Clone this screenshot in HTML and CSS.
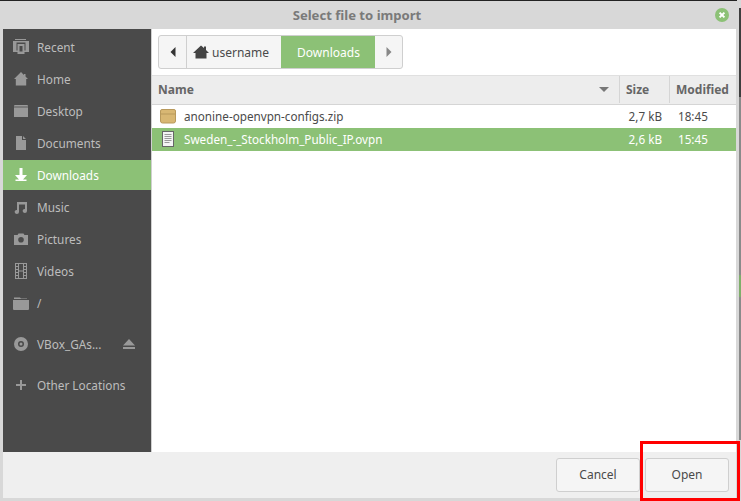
FILE: index.html
```html
<!DOCTYPE html>
<html lang="en">
<head>
<meta charset="utf-8">
<title>Select file to import</title>
<link rel="stylesheet" href="styles.css">
</head>
<body>
<div class="topline"></div>
<div class="backdrop"></div>
<div class="dialog">
  <header class="titlebar">
    <span class="title">Select file to import</span>
    <span class="close"><svg width="14" height="14" viewBox="0 0 14 14"><circle cx="7" cy="7" r="7" fill="#8cc176"/><path d="M4.600 4.600l4.800 4.800M9.400 4.600l-4.800 4.800" stroke="#fff" stroke-width="2" fill="none"/></svg></span>
  </header>
  <div class="main">
    <nav class="sidebar">
      <div class="place"><span class="ico"><svg width="16" height="16" viewBox="0 0 16 16"><path d="M2 0h11v1H2zM0 2h16v1.500H0zM0 3.500h3.500V13H0zM12.500 3.500H16V13h-3.500zM4.500 5h7v2h-7zM4.500 7h2v7h-2zM9.500 7h2v7h-2zM4.500 12.500h7V15h-7zM3.500 11.500V13h1v-1.500zM11.500 11.500V13h1v-1.500z" fill="#999"/></svg></span>Recent</div>
      <div class="place"><span class="ico"><svg width="16" height="16" viewBox="0 0 16 16"><path d="M8 1L1 8h1.800v6.500h10.400V8H15l-2.500-2.500V3h-1.500v1z" fill="#999"/></svg></span>Home</div>
      <div class="place"><span class="ico"><svg width="16" height="16" viewBox="0 0 16 16"><path d="M2 2h12a1 1 0 0 1 1 1v11H1V3a1 1 0 0 1 1-1z" fill="#999"/><path d="M1 4h14" stroke="#4a4a4a" stroke-width=".8"/></svg></span>Desktop</div>
      <div class="place"><span class="ico"><svg width="16" height="16" viewBox="0 0 16 16"><path d="M3 1h6v4h4v10H3zM10 1l3 3h-3z" fill="#999"/></svg></span>Documents</div>
      <div class="place selected"><span class="ico"><svg width="16" height="16" viewBox="0 0 16 16"><path d="M6.500 1h3v7H14l-4 4.500h3.500V14H2.500v-1.500H6L2 8h4.500z" fill="#fff"/></svg></span>Downloads</div>
      <div class="place"><span class="ico"><svg width="16" height="16" viewBox="0 0 16 16"><path d="M4 3h10v9a2.200 2 0 1 1-2-2V5.500H6V13a2.200 2 0 1 1-2-2z" fill="#999"/></svg></span>Music</div>
      <div class="place"><span class="ico"><svg width="16" height="16" viewBox="0 0 16 16"><path fill-rule="evenodd" d="M1 4h3.500l1-1.500h5l1 1.500H15v10H1zM8 6a2.800 2.800 0 1 0 0 5.600A2.800 2.800 0 0 0 8 6z" fill="#999"/></svg></span>Pictures</div>
      <div class="place"><span class="ico"><svg width="16" height="16" viewBox="0 0 16 16"><path fill-rule="evenodd" d="M2 0h12v16H2zM3 1v2h2V1zM3 4v2h2V4zM3 7v2h2V7zM3 10v2h2v-2zM3 13v2h2v-2zM11 1v2h2V1zM11 4v2h2V4zM11 7v2h2V7zM11 10v2h2v-2zM11 13v2h2v-2zM6 1v6.500h4V1zM6 8.500V15h4V8.500z" fill="#999"/></svg></span>Videos</div>
      <div class="place"><span class="ico"><svg width="16" height="16" viewBox="0 0 16 16"><path d="M1 4V2.500h6l1 1h6V4zM0 5h16v9a1 1 0 0 1-1 1H1a1 1 0 0 1-1-1z" fill="#999"/></svg></span>/</div>
      <div class="separator"></div>
      <div class="place device"><span class="ico"><svg width="16" height="16" viewBox="0 0 16 16"><path fill-rule="evenodd" d="M8 1a7 7 0 1 0 0 14A7 7 0 0 0 8 1zM8 5a3 3 0 1 1 0 6 3 3 0 0 1 0-6zM8 6.500a1.500 1.500 0 1 0 0 3 1.500 1.500 0 0 0 0-3z" fill="#999"/></svg></span><span class="label">VBox_GAs...</span><span class="eject"><svg width="14" height="14" viewBox="0 0 14 14"><path d="M7 2l6 6.500H1zM1 10h12v2H1z" fill="#999"/></svg></span></div>
      <div class="separator"></div>
      <div class="place"><span class="ico"><svg width="16" height="16" viewBox="0 0 16 16"><path d="M7 3h2v4h4v2H9v4H7V9H3V7h4z" fill="#999"/></svg></span>Other Locations</div>
    </nav>
    <section class="content">
      <div class="pathbar-row">
        <div class="pathbar">
          <span class="arrow"><svg width="6" height="10" viewBox="0 0 6 10"><path d="M5.500 0v10L.5 5z" fill="#333"/></svg></span>
          <span class="crumb"><svg class="crumb-ico" width="16" height="16" viewBox="0 0 16 16"><path d="M8 1.500L0 9h2.500v5.500h11V9H16l-3-3V2.500h-2V4z" fill="#444"/></svg>username</span>
          <span class="crumb active">Downloads</span>
          <span class="arrow end"><svg width="6" height="10" viewBox="0 0 6 10"><path d="M.5 0v10l5-5z" fill="#888"/></svg></span>
        </div>
      </div>
      <div class="list">
        <div class="head">
          <div class="col name">Name<svg class="sort" width="10" height="5" viewBox="0 0 10 5"><path d="M0 0h10L5 5z" fill="#777"/></svg></div>
          <div class="col size">Size</div>
          <div class="col modified">Modified</div>
        </div>
        <div class="row">
          <div class="cell name"><svg class="file-ico" width="16" height="16" viewBox="0 0 16 16"><path d="M2 1.500h12a1.500 1.500 0 0 1 1.500 1.500v10a2 2 0 0 1-2 2h-11a2 2 0 0 1-2-2V3A1.500 1.500 0 0 1 2 1.500z" fill="#d8b773" stroke="#b8995c"/><path d="M1 6h14" stroke="#b8995c"/></svg>anonine-openvpn-configs.zip</div>
          <div class="cell size">2,7 kB</div>
          <div class="cell modified">18:45</div>
        </div>
        <div class="row selected">
          <div class="cell name"><svg class="file-ico" width="16" height="16" viewBox="0 0 16 16"><rect x="2.500" y=".5" width="11" height="15" fill="#f4f4f4" stroke="#666"/><path d="M4.500 3.500h7M4.500 5.500h7M4.500 7.500h7M4.500 9.500h7M4.500 11.500h5" stroke="#999"/></svg>Sweden_-_Stockholm_Public_IP.ovpn</div>
          <div class="cell size">2,6 kB</div>
          <div class="cell modified">15:45</div>
        </div>
      </div>
    </section>
  </div>
  <footer class="actions">
    <button class="btn">Cancel</button>
    <button class="btn">Open</button>
  </footer>
</div>
<div class="highlight"></div>
</body>
</html>
```
FILE: styles.css
```css
* { box-sizing: border-box; }
html, body { margin: 0; height: 100%; overflow: hidden; }
body {
  background: #d8d8d8;
  font-family: "Noto Sans", sans-serif;
  font-size: 12px;
  color: #4a4a4a;
  position: relative;
}
.topline { height: 1px; background: #222; margin-right: 4px; }
.backdrop {
  position: absolute;
  right: 0;
  top: 8px;
  width: 2px;
  height: 432px;
  background: linear-gradient(#3e3e3e 0 89px, #8a8a8a 89px 267px, #7fae6a 267px 289px, #8a8a8a 289px);
}
.dialog {
  display: flex;
  flex-direction: column;
  height: 497px;
  margin-right: 5px;
  padding-left: 3px;
}
.titlebar {
  height: 28px;
  flex: none;
  display: flex;
  align-items: center;
  justify-content: center;
  padding-right: 25px;
  position: relative;
}
.title { font-size: 13.100px; font-weight: 700; color: #7a7a7a; }
.close { position: absolute; right: 7px; top: 7px; line-height: 0; }
.main { flex: 1; display: flex; min-height: 0; background: #fff; }
.sidebar {
  width: 148px;
  flex: none;
  background: #4a4a4a;
  color: #bdbdbd;
  font-size: 11.8px;
  padding-top: 2px;
}
.place {
  height: 32px;
  display: flex;
  align-items: center;
  padding-left: 10px;
}
.place.selected { background: #8cc176; color: #fff; height: 30px; margin: 1px 0; }
.ico { width: 16px; height: 16px; margin-right: 8px; line-height: 0; flex: none; }
.separator { height: 9px; }
.label { flex: 1; }
.eject { margin-right: 15px; line-height: 0; }
.content { flex: 1; display: flex; flex-direction: column; min-width: 0; border-left: 1px solid #d0d0d0; }
.pathbar-row { height: 46px; padding: 6px 0 0 6px; flex: none; }
.pathbar {
  display: inline-flex;
  height: 34px;
  border: 1px solid #cfcfcf;
  border-radius: 3px;
  background: #f5f5f5;
  overflow: hidden;
}
.arrow { width: 28px; display: flex; align-items: center; justify-content: center; border-right: 1px solid #cfcfcf; }
.arrow.end { border-right: 0; width: 27px; }
.crumb { display: flex; align-items: center; padding: 0 12px 0 6px; }
.crumb-ico { margin-right: 3px; }
.crumb.active { background: #8cc176; color: #fff; padding: 0 16px; width: 94px; }
.head { display: flex; height: 30px; padding-bottom: 1px; background: #ededed; border-top: 1px solid #e0e0e0; border-bottom: 1px solid #d5d5d5; font-weight: 700; color: #666; }
.col { display: flex; align-items: center; padding-left: 6px; }
.col.name { flex: 1; justify-content: space-between; padding-right: 10px; }
.col.size { width: 50px; border-left: 1px solid #d5d5d5; }
.col.modified { width: 67px; border-left: 1px solid #d5d5d5; }
.row { display: flex; height: 23px; align-items: center; font-size: 11.7px; }
.row.selected { background: #8cc176; color: #fff; }
.cell { padding-bottom: 1px; }
.cell.name { flex: 1; display: flex; align-items: center; padding-left: 8px; }
.file-ico { margin-right: 8px; flex: none; }
.cell.size { width: 50px; text-align: right; padding-right: 7px; }
.cell.modified { width: 67px; padding-left: 9px; }
.actions {
  flex: none;
  height: 46px;
  background: #efefef;
  display: flex;
  justify-content: flex-end;
  align-items: center;
  gap: 5px;
  padding: 0 7px 0 0;
}
.btn {
  width: 84px;
  height: 34px;
  padding: 0 0 2px;
  font: inherit;
  color: #4a4a4a;
  background: #f5f5f5;
  border: 1px solid #cfcfcf;
  border-radius: 3px;
}
.highlight {
  position: absolute;
  left: 640px;
  top: 441px;
  width: 100px;
  height: 60px;
  border: 3px solid #f00;
}
```
